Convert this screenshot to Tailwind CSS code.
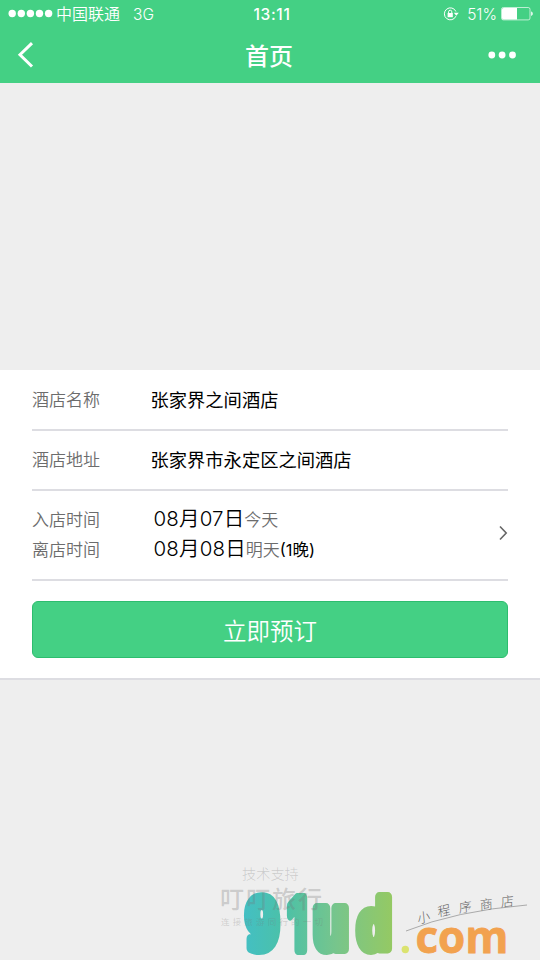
<!DOCTYPE html>
<html lang="zh-CN">
<head>
<meta charset="utf-8">
<title>首页</title>
<script src="https://cdn.jsdelivr.net/npm/@tailwindcss/browser@4"></script>
</head>
<body class="w-[540px] h-[960px] overflow-hidden bg-[#eeeeee] font-['Inter','Noto_Sans_CJK_SC',sans-serif] text-black flex flex-col">
<header class="h-[83px] shrink-0 bg-[#44d084] text-white">
  <div class="h-[27px] grid grid-cols-[1fr_auto_1fr] items-center pl-[8px] pr-[7px] text-[15.5px] leading-[27px]">
    <div class="flex items-center font-[350]">
      <svg class="w-[45px] h-[9px] mr-[3px] mb-[2px]" viewBox="0 0 45 9" fill="#fff"><circle cx="4.2" cy="4.5" r="3.7"/><circle cx="13.3" cy="4.5" r="3.7"/><circle cx="22.4" cy="4.5" r="3.7"/><circle cx="31.5" cy="4.5" r="3.7"/><circle cx="40.6" cy="4.5" r="3.7"/></svg>
      <span class="text-[16px] pt-[1px]">中国联通</span><span class="ml-[13px]">3G</span>
    </div>
    <div class="font-medium text-[15.5px] tracking-[0.7px] pl-[3px]">13:11</div>
    <div class="flex items-center justify-end font-[350]">
      <svg class="w-[16px] h-[14px] mr-[8px] mb-px" viewBox="0 0 16 14" fill="none" stroke="#fff"><path d="M12.9 9.2A6 6 0 1 1 12.9 4.5"/><path d="M10.800 5.800h5l-2.500 3z" fill="#fff" stroke="none"/><rect x="4.600" y="6" width="5.200" height="4.200" fill="#fff" stroke="none"/><path d="M5.600 6.200V4.800a1.600 1.600 0 0 1 3.200 0v1.400"/></svg>
      <span class="text-[15.5px] mr-[4px]">51%</span>
      <svg class="w-[32px] h-[14px]" viewBox="0 0 32 14"><rect x=".5" y=".5" width="28.5" height="12.4" rx="1.8" fill="none" stroke="#fff" stroke-opacity=".65"/><path d="M2.500 1H16v11.400H2.500a1.500 1.500 0 0 1-1.500-1.500V2.500a1.500 1.500 0 0 1 1.500-1.500z" fill="#fff"/><path d="M30.200 4.500c2 .6 2 3.800 0 4.400z" fill="#fff"/></svg>
    </div>
  </div>
  <div class="h-[56px] grid grid-cols-[1fr_auto_1fr] items-center pl-[17px] pr-[23px]">
    <svg class="w-[18px] h-[28px]" viewBox="0 0 18 28" fill="none" stroke="#fff" stroke-width="3"><path d="M15 2.200 3 13.700 15 25.500"/></svg>
    <h1 class="text-[24px] leading-[56px] font-medium pl-[4px] pt-[2px] h-[56px]">首页</h1>
    <svg class="justify-self-end w-[30px] h-[10px]" viewBox="0 0 30 10" fill="#fff"><circle cx="4.800" cy="5" r="3.400"/><circle cx="15.100" cy="5" r="3.400"/><circle cx="25.500" cy="5" r="3.400"/></svg>
  </div>
</header>
<main class="mt-[287px] h-[310px] shrink-0 bg-white border-b-2 border-[#dddde2] px-[32px] text-[17px] text-[#6c6c6c]">
  <div class="h-[61px] border-b-2 border-[#dddde2] pt-[2px] flex items-center"><span class="w-[118.5px] font-[350]">酒店名称</span><span class="text-[18.3px] text-black">张家界之间酒店</span></div>
  <div class="h-[60px] border-b-2 border-[#dddde2] pt-[2px] flex items-center"><span class="w-[118.5px] font-[350]">酒店地址</span><span class="text-[18.3px] text-black">张家界市永定区之间酒店</span></div>
  <div class="h-[90px] border-b-2 border-[#dddde2] flex items-center justify-between">
    <div class="leading-[30px] font-[350]">
      <div class="flex h-[30px] items-center"><span class="w-[121.5px]">入店时间</span><span class="text-[20.5px] text-black tracking-[0.15px] h-[32px]">08月07日</span><span>今天</span></div>
      <div class="flex h-[30px] items-center"><span class="w-[121.5px]">离店时间</span><span class="text-[20.5px] text-black tracking-[0.15px] h-[32px]">08月08日</span><span>明天</span><span class="text-[16.5px] font-normal text-black">(1晚)</span></div>
    </div>
    <svg class="w-[10px] h-[16px] mb-[4px]" viewBox="0 0 10 16" fill="none" stroke="#666" stroke-width="1.6"><path d="M2 1.500 8.200 8 2 14.500"/></svg>
  </div>
  <button class="mt-[20px] w-[476px] h-[57px] block rounded-[6px] border border-[#2dbd6e] bg-[#44d084] text-white text-[23.5px] font-[350] pt-[4px]">立即预订</button>
</main>
<footer class="relative flex-1 font-['Noto_Sans_CJK_SC',sans-serif]">
  <svg class="absolute left-0 top-[170px] w-[540px] h-[110px]" viewBox="0 850 540 110">
    <defs><linearGradient id="g" gradientUnits="userSpaceOnUse" x1="243" y1="0" x2="393" y2="0"><stop offset="0" stop-color="#43bfc4"/><stop offset=".28" stop-color="#4cc1a7"/><stop offset=".62" stop-color="#77c58c"/><stop offset="1" stop-color="#95c963"/></linearGradient></defs>
    <g fill="url(#g)" stroke="url(#g)" stroke-width="10" stroke-linejoin="round" font-family="DejaVu Sans Mono" font-weight="700">
      <text x="245" y="948.500" font-size="69" textLength="35" lengthAdjust="spacingAndGlyphs">9</text>
      <text x="288" y="949.500" font-size="71" font-family="Inter" textLength="19" lengthAdjust="spacingAndGlyphs">1</text>
      <text x="312" y="948.500" font-size="74" textLength="38" lengthAdjust="spacingAndGlyphs">u</text>
      <text x="357" y="948.500" font-size="67" textLength="35" lengthAdjust="spacingAndGlyphs">d</text>
    </g>
    <g fill="#777" fill-opacity=".3">
      <text x="242" y="879" font-size="14.2" font-weight="300">技术支持</text>
      <text x="220" y="908" font-size="24" font-weight="500" textLength="102">叮叮旅行</text>
      <text x="221" y="924.500" font-size="8.500" textLength="102" fill-opacity=".28">连接旅游同行的一切</text>
    </g>
    <circle cx="405.300" cy="949.500" r="3.700" fill="#dbe36f"/>
    <text x="415.500" y="953" font-family="Open Sans" font-size="44" font-weight="700" fill="#f2a24f" stroke="#f2a24f" stroke-width=".8" textLength="93" lengthAdjust="spacingAndGlyphs">com</text>
    <path d="M406 931Q455 911 527 905" fill="none" stroke="#aaa" stroke-width="1"/>
    <g fill="#666" font-size="13" font-weight="300">
      <text transform="translate(418 924) rotate(-16) skewX(-10)">小</text>
      <text transform="translate(438 917) rotate(-13) skewX(-8)">程</text>
      <text transform="translate(459 913) rotate(-10) skewX(-8)">序</text>
      <text transform="translate(480 910) rotate(-8) skewX(-6)">商</text>
      <text transform="translate(501 907) rotate(-7) skewX(-6)">店</text>
    </g>
  </svg>
</footer>
</body>
</html>
